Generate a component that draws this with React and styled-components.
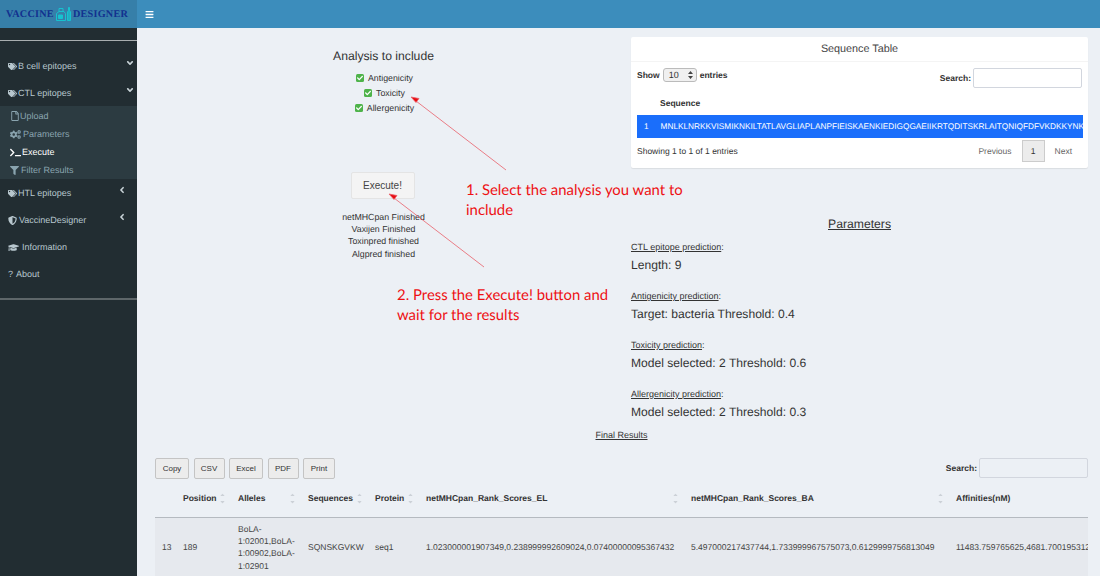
import React from 'react';
import styled, { createGlobalStyle } from 'styled-components';
import { FaTags, FaRegFile, FaCogs, FaTerminal, FaFilter, FaShieldAlt, FaGraduationCap, FaAngleDown, FaAngleLeft, FaBars, FaCheck, FaSortUp, FaSortDown } from 'react-icons/fa';

const Global = createGlobalStyle`
  html, body { margin: 0; padding: 0; height: 576px; overflow: hidden; background: #ecf0f5; }
  body { font-family: "Liberation Sans", Arial, sans-serif; color: #333; text-rendering: geometricPrecision; }
  * { box-sizing: border-box; }
`;

const Page = styled.div`
  position: relative; width: 1100px; height: 576px; overflow: hidden;
  display: grid; grid-template-columns: 137px 1fr; grid-template-rows: 28px 1fr;
`;
const Logo = styled.div`
  background: #367fa9; display: flex; align-items: center; justify-content: center; gap: 2px; padding-left: 1px; padding-right: 4px;
  font-family: "Liberation Serif", serif; font-weight: 700; font-size: 10.2px; letter-spacing: .25px; color: #12318f;
`;
const TopBar = styled.div`
  background: #3c8dbc; display: flex; align-items: center; padding-left: 8px; color: #fff; font-size: 9px;
`;
const Side = styled.nav`
  background: #222d32; display: flex; flex-direction: column; color: #b8c7ce; font-size: 9px;
`;
const SideRule = styled.div`
  height: ${p => p.$h}px; background: ${p => p.$c}; margin-top: ${p => p.$top}px; margin-bottom: ${p => p.$bottom}px; flex: none;
`;
const MenuItem = styled.div`
  height: 27px; display: flex; align-items: center; padding: 1px 4px 0 8px; gap: ${p => p.$gap ?? 1}px; position: relative; color: #b8c7ce; white-space: nowrap;
  svg { flex: none; }
`;
const Caret = styled.span`
  margin-left: auto; display: flex; margin-right: ${p => p.$right}px; margin-top: -6px; color: #c8d2d7;
`;
const Sub = styled.div`
  background: #2c3b41; display: flex; flex-direction: column; padding: 1px 0 0 10px; height: 73px; justify-content: center;
`;
const SubItem = styled.div`
  height: 18.3px; display: flex; align-items: center; gap: ${p => p.$gap}px; color: ${p => p.$c || '#8aa4af'}; white-space: nowrap;
`;
const Main = styled.main`
  display: flex; flex-direction: column; min-width: 0; overflow: hidden;
`;
const Top = styled.div`
  display: grid; grid-template-columns: 494px 457px; height: 396px;
`;
const LeftCol = styled.div`
  display: flex; flex-direction: column; align-items: center; padding-top: 20px; padding-right: 1px;
`;
const Heading = styled.div`
  font-size: 12.2px; line-height: 16px; color: #333;
`;
const Checks = styled.div`
  display: flex; flex-direction: column; align-items: center; margin-top: 6px; margin-left: 2px;
`;
const CheckRow = styled.div`
  height: 15px; display: flex; align-items: center; gap: 4px; font-size: 8.8px;
`;
const CheckBox = styled.span`
  width: 8px; height: 8px; background: #4eb34a; border-radius: 1.5px; display: flex; align-items: center; justify-content: center; color: #fff; font-size: 6px;
`;
const Exec = styled.button`
  margin-top: 57px; margin-right: 2px; width: 64px; height: 27px; background: #f4f4f4; border: 1px solid #e4e4e4; border-radius: 2px; font: 10px "Liberation Sans", sans-serif; color: #444; padding: 0;
`;
const Status = styled.div`
  margin-top: 11.5px; font-size: 8.8px; line-height: 12.4px; text-align: center;
`;
const RightCol = styled.div`
  display: flex; flex-direction: column; padding-top: 9px;
`;
const Card = styled.section`
  background: #fff; height: 131px; border-radius: 2px; box-shadow: 0 1px 1px rgba(0,0,0,.08); padding: 0 6px; display: flex; flex-direction: column;
`;
const CardTitle = styled.div`
  height: 25px; margin: 0 -6px; border-bottom: 1px solid #f4f4f4; text-align: center; font-size: 10.8px; line-height: 24px; color: #444;
`;
const Controls = styled.div`
  display: flex; justify-content: space-between; padding-top: 6px; font-size: 8.5px; height: 29px; align-items: flex-start;
`;
const ShowLabel = styled.label`
  display: flex; align-items: center; gap: 3px; font-weight: 700;
`;
const Sel = styled.span`
  width: 34px; height: 14px; border: 1px solid #bbb; border-radius: 3px; background: #f0f0f0; display: flex; align-items: center; justify-content: space-between; padding: 0 3px 0 5px; font-weight: 400; font-size: 9px; color:#333;
`;
const SearchLabel = styled.label`
  display: flex; align-items: center; gap: 2px; font-weight: 700; font-size: 8.5px;
`;
const SearchInput = styled.span`
  display: block; width: ${p => p.$w}px; height: 20px; border: 1px solid #d2d6de; background: ${p => p.$bg || '#fff'}; border-radius: 2px;
`;
const SeqHead = styled.div`
  height: 24px; display: flex; align-items: center; padding-left: 23px; font-size: 8.5px; font-weight: 700;
`;
const SeqRow = styled.div`
  height: 23px; background: #1a6efb; color: #fff; font-size: 8.25px; display: flex; align-items: center; gap: 12px; padding-left: 7px; white-space: nowrap; overflow: hidden; margin-right: -1px;
`;
const Foot = styled.div`
  display: flex; justify-content: space-between; align-items: center; flex: 1; font-size: 8.5px; color: #333; padding-bottom: 5px;
`;
const Pager = styled.div`
  display: flex; align-items: center; color: #666; font-size: 8.5px;
  span { padding: 0 10px; }
`;
const PageNo = styled.b`
  width: 23px; height: 22px; background: #ececec; border: 1px solid #ccc; display: flex; align-items: center; justify-content: center; font-weight: 400; color: #333;
`;
const ParamTitle = styled.div`
  margin-top: 48px; text-align: center; font-size: 12.2px; line-height: 16px; text-decoration: underline; color: #333;
`;
const ParamBlock = styled.div`
  margin-top: ${p => p.$top}px;
`;
const ParamLabel = styled.div`
  font-size: 9px; line-height: 12px;
  u { text-decoration: underline; }
`;
const ParamValue = styled.div`
  font-size: 12.1px; line-height: 16px; margin-top: 4px; color: #333;
`;
const Final = styled.div`
  text-align: center; font-size: 9px; line-height: 12px; text-decoration: underline; padding-left: 6px; margin-top: 5px;
`;
const TableBar = styled.div`
  margin: 16px 12px 0 18px; display: flex; justify-content: space-between; align-items: center; height: 22px;
`;
const Buttons = styled.div`
  display: flex; gap: 4.5px;
`;
const Btn = styled.button`
  height: 21px; width: ${p => p.$w}px; padding: 0; background: #ececec; border: 1px solid #c4c4c4; border-radius: 2px; font: 8px "Liberation Sans", sans-serif; color: #333;
`;
const TableWrap = styled.div`
  margin: 7px 12px 0 18px; overflow: hidden; flex: 1;
`;
const Table = styled.table`
  border-collapse: collapse; table-layout: fixed; width: 1094px; font-size: 8.5px;
`;
const Th = styled.th`
  height: 31px; text-align: left; padding: 0 7px 6px; border-bottom: 1px solid #b5bac0; font-weight: 700; font-size: 8.5px; white-space: nowrap; position: relative; color: #333;
`;
const Sort = styled.span`
  position: absolute; right: 5px; top: calc(50% - 3px); transform: translateY(-50%); display: flex; flex-direction: column; color: #ccd1d7; line-height: 0;
  svg { margin: -1.5px 0; }
`;
const Td = styled.td`
  background: #e6e9ee; padding: 5px 7px; line-height: 12.4px; white-space: ${p => p.$wrap ? 'normal' : 'nowrap'}; color: #444; overflow: hidden; vertical-align: middle;
`;
const Overlay = styled.svg`
  position: absolute; left: 0; top: 0; width: 1100px; height: 576px; pointer-events: none;
`;
const Note = styled.div`
  position: absolute; left: ${p => p.$x}px; top: ${p => p.$y}px; width: ${p => p.$w}px; color: #ee1014; font-family: Lato, sans-serif; font-size: 14.9px; line-height: 19.5px;
`;

const widths = [21, 55, 70, 67, 51, 265, 265, 300];
const heads = ['', 'Position', 'Alleles', 'Sequences', 'Protein', 'netMHCpan_Rank_Scores_EL', 'netMHCpan_Rank_Scores_BA', 'Affinities(nM)'];

const Vial = () => (
  <svg width="15" height="14" viewBox="0 0 15 14" fill="none" stroke="#16c3cf" strokeWidth="1">
    <path d="M3 4.5h5l1.5 2v7H.5v-7z M3 1.5h4v3H3z" />
    <path d="M2.5 8h4v3.5h-4z" fill="#16c3cf" />
    <path d="M12.5.5h1v3l1 1.5v8.5h-3V5l1-1.5z" fill="#16c3cf" fillOpacity=".7" />
  </svg>
);

export default function App() {
  return (
    <>
      <Global />
      <Page>
        <Logo>VACCINE<Vial />DESIGNER</Logo>
        <TopBar><FaBars size={9} /></TopBar>
        <Side>
          <SideRule $top={12} $bottom={11} $h={1} $c="#a9aeb0" />
          <MenuItem><FaTags size={9} />B cell epitopes<Caret $right={-2}><FaAngleDown size={10} /></Caret></MenuItem>
          <MenuItem><FaTags size={9} />CTL epitopes<Caret $right={-2}><FaAngleDown size={10} /></Caret></MenuItem>
          <Sub>
            <SubItem $gap={-1}><FaRegFile size={10} />Upload</SubItem>
            <SubItem $gap={2}><FaCogs size={11} />Parameters</SubItem>
            <SubItem $gap={1} $c="#fff"><FaTerminal size={11} />Execute</SubItem>
            <SubItem $gap={2}><FaFilter size={9} />Filter Results</SubItem>
          </Sub>
          <MenuItem><FaTags size={9} />HTL epitopes<Caret $right={6}><FaAngleLeft size={10} /></Caret></MenuItem>
          <MenuItem $gap={2}><FaShieldAlt size={9} />VaccineDesigner<Caret $right={6}><FaAngleLeft size={10} /></Caret></MenuItem>
          <MenuItem $gap={3}><FaGraduationCap size={11} />Information</MenuItem>
          <MenuItem $gap={3}><span>?</span>About</MenuItem>
          <SideRule $top={11} $bottom={0} $h={2} $c="#5e6669" />
        </Side>
        <Main>
          <Top>
            <LeftCol>
              <Heading>Analysis to include</Heading>
              <Checks>
                <CheckRow><CheckBox><FaCheck /></CheckBox>Antigenicity</CheckRow>
                <CheckRow><CheckBox><FaCheck /></CheckBox>Toxicity</CheckRow>
                <CheckRow><CheckBox><FaCheck /></CheckBox>Allergenicity</CheckRow>
              </Checks>
              <Exec>Execute!</Exec>
              <Status>netMHCpan Finished<br />Vaxijen Finished<br />Toxinpred finished<br />Algpred finished</Status>
            </LeftCol>
            <RightCol>
              <Card>
                <CardTitle>Sequence Table</CardTitle>
                <Controls>
                  <ShowLabel><span>Show</span><Sel>10<svg width="5" height="8" viewBox="0 0 5 8"><path d="M2.5 0L5 3H0zM2.5 8L0 5h5z" fill="#444" /></svg></Sel><span>entries</span></ShowLabel>
                  <SearchLabel>Search:<SearchInput $w={109} /></SearchLabel>
                </Controls>
                <SeqHead>Sequence</SeqHead>
                <SeqRow><span>1</span><span>MNLKLNRKKVISMIKNKILTATLAVGLIAPLANPFIEISKAENKIEDIGQGAEIIKRTQDITSKRLAITQNIQFDFVKDKKYNKDALVVKMQGFISSRTTYSDLKKYPYIK</span></SeqRow>
                <Foot>
                  <span>Showing 1 to 1 of 1 entries</span>
                  <Pager><span>Previous</span><PageNo>1</PageNo><span>Next</span></Pager>
                </Foot>
              </Card>
              <ParamTitle>Parameters</ParamTitle>
              <ParamBlock $top={9}><ParamLabel><u>CTL epitope prediction</u>:</ParamLabel><ParamValue>Length: 9</ParamValue></ParamBlock>
              <ParamBlock $top={17}><ParamLabel><u>Antigenicity prediction</u>:</ParamLabel><ParamValue>Target: bacteria Threshold: 0.4</ParamValue></ParamBlock>
              <ParamBlock $top={17}><ParamLabel><u>Toxicity prediction</u>:</ParamLabel><ParamValue>Model selected: 2 Threshold: 0.6</ParamValue></ParamBlock>
              <ParamBlock $top={17}><ParamLabel><u>Allergenicity prediction</u>:</ParamLabel><ParamValue>Model selected: 2 Threshold: 0.3</ParamValue></ParamBlock>
            </RightCol>
          </Top>
          <Final>Final Results</Final>
          <TableBar>
            <Buttons>
              <Btn $w={34}>Copy</Btn><Btn $w={31}>CSV</Btn><Btn $w={34}>Excel</Btn><Btn $w={31}>PDF</Btn><Btn $w={32}>Print</Btn>
            </Buttons>
            <SearchLabel>Search:<SearchInput $w={109} $bg="#ecf0f5" /></SearchLabel>
          </TableBar>
          <TableWrap>
            <Table>
              <colgroup>{widths.map((w, i) => <col key={i} style={{ width: w }} />)}</colgroup>
              <thead>
                <tr>
                  {heads.map((h, i) => (
                    <Th key={i}>{h}{i > 0 && i < 7 && <Sort><FaSortUp size={7} /><FaSortDown size={7} /></Sort>}</Th>
                  ))}
                </tr>
              </thead>
              <tbody>
                <tr>
                  <Td>13</Td><Td>189</Td><Td $wrap>BoLA-1:02001,BoLA-1:00902,BoLA-1:02901</Td><Td>SQNSKGVKW</Td><Td>seq1</Td>
                  <Td>1.023000001907349,0.238999992609024,0.07400000095367432</Td>
                  <Td>5.497000217437744,1.733999967575073,0.6129999756813049</Td>
                  <Td>11483.759765625,4681.7001953125,2517.10009765625</Td>
                </tr>
              </tbody>
            </Table>
          </TableWrap>
        </Main>
        <Overlay viewBox="0 0 1100 576">
          <g stroke="#e9606a" strokeWidth=".8" fill="#e80d12">
            <line x1="506" y1="170" x2="416" y2="101" />
            <path d="M411 97l8 1.5-3 4z" />
            <line x1="484" y1="267" x2="394" y2="198" />
            <path d="M389 194l8 1.5-3 4z" />
          </g>
        </Overlay>
        <Note $x={466} $y={181} $w={240}>1. Select the analysis you want to include</Note>
        <Note $x={397} $y={286} $w={225}>2. Press the Execute! button and wait for the results</Note>
      </Page>
    </>
  );
}
